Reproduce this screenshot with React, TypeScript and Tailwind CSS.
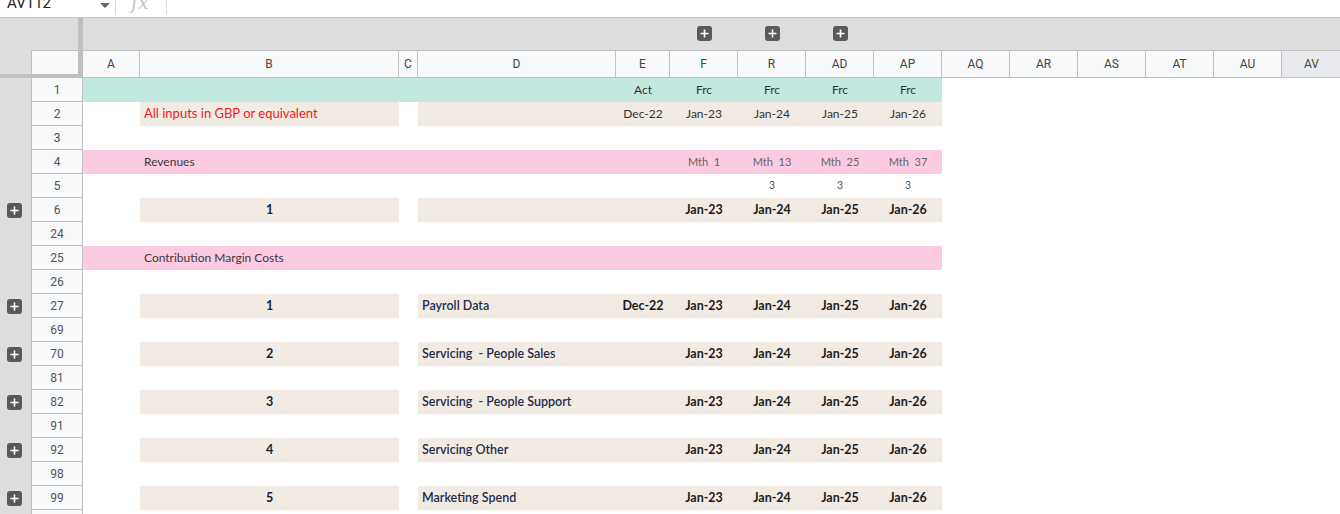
import React from "react";

type Col = { k: string; w: string };
const cols: Col[] = [
  { k: "A", w: "w-[57px]" },
  { k: "B", w: "w-[259px]" },
  { k: "C", w: "w-[19px]" },
  { k: "D", w: "w-[198px]" },
  { k: "E", w: "w-[54px]" },
  { k: "F", w: "w-[68px]" },
  { k: "R", w: "w-[68px]" },
  { k: "AD", w: "w-[68px]" },
  { k: "AP", w: "w-[68px]" },
  { k: "AQ", w: "w-[68px]" },
  { k: "AR", w: "w-[68px]" },
  { k: "AS", w: "w-[68px]" },
  { k: "AT", w: "w-[68px]" },
  { k: "AU", w: "w-[68px]" },
  { k: "AV", w: "w-[60px]" },
];

const Plus = () => (
  <div className="w-[15px] h-[15px] rounded-[3px] bg-[#5a5a5a] flex items-center justify-center shrink-0">
    <svg width="9" height="9" viewBox="0 0 9 9">
      <path d="M4.5 0.5v8M0.5 4.5h8" stroke="#ffffff" strokeWidth="1.6" />
    </svg>
  </div>
);

type Cell = { bg?: string; text?: React.ReactNode; cls?: string };
type RowDef = { n: string; plus?: boolean; cells: Record<string, Cell> };

const TEAL = "bg-[#c1e9df]";
const PINK = "bg-[#fdcbe1]";
const BEIGE = "bg-[#f2ebe4]";

const fillAll = (bg: string): Record<string, Cell> => {
  const r: Record<string, Cell> = {};
  ["A", "B", "C", "D", "E", "F", "R", "AD", "AP"].forEach((k) => (r[k] = { bg }));
  return r;
};
const beigeRow = (): Record<string, Cell> => {
  const r: Record<string, Cell> = {};
  ["B", "D", "E", "F", "R", "AD", "AP"].forEach((k) => (r[k] = { bg: BEIGE }));
  return r;
};

const norm = "justify-center text-[12px] text-[#333333]";
const boldJ = "justify-center text-[12.5px] font-bold text-[#1a1a1a]";

const sectionRow = (n: string, num: string, label: string, dec?: boolean): RowDef => {
  const c = beigeRow();
  c.B = { bg: BEIGE, text: num, cls: "justify-center text-[12.5px] font-bold text-[#0f1f3a]" };
  if (label) c.D = { bg: BEIGE, text: label, cls: "pl-[4px] text-[12.5px] font-semibold text-[#1d2b4d] whitespace-pre" };
  if (dec) c.E = { bg: BEIGE, text: "Dec-22", cls: boldJ };
  c.F = { bg: BEIGE, text: "Jan-23", cls: boldJ };
  c.R = { bg: BEIGE, text: "Jan-24", cls: boldJ };
  c.AD = { bg: BEIGE, text: "Jan-25", cls: boldJ };
  c.AP = { bg: BEIGE, text: "Jan-26", cls: boldJ };
  return { n, plus: true, cells: c };
};

const row1 = (() => {
  const c = fillAll(TEAL);
  c.E = { bg: TEAL, text: "Act", cls: norm };
  c.F = { bg: TEAL, text: "Frc", cls: norm };
  c.R = { bg: TEAL, text: "Frc", cls: norm };
  c.AD = { bg: TEAL, text: "Frc", cls: norm };
  c.AP = { bg: TEAL, text: "Frc", cls: norm };
  return c;
})();

const row2 = (() => {
  const c = beigeRow();
  c.B = { bg: BEIGE, text: "All inputs in GBP or equivalent", cls: "pl-[4px] text-[13px] text-[#f01c1c]" };
  c.E = { bg: BEIGE, text: "Dec-22", cls: norm };
  c.F = { bg: BEIGE, text: "Jan-23", cls: norm };
  c.R = { bg: BEIGE, text: "Jan-24", cls: norm };
  c.AD = { bg: BEIGE, text: "Jan-25", cls: norm };
  c.AP = { bg: BEIGE, text: "Jan-26", cls: norm };
  return c;
})();

const mth = "justify-center text-[11px] text-[#666666] whitespace-pre";
const row4 = (() => {
  const c = fillAll(PINK);
  c.B = { bg: PINK, text: "Revenues", cls: "pl-[4px] text-[12px] text-[#3a3a3a]" };
  c.F = { bg: PINK, text: "Mth  1", cls: mth };
  c.R = { bg: PINK, text: "Mth  13", cls: mth };
  c.AD = { bg: PINK, text: "Mth  25", cls: mth };
  c.AP = { bg: PINK, text: "Mth  37", cls: mth };
  return c;
})();

const three = "justify-center text-[10.5px] text-[#555555]";
const row5: Record<string, Cell> = {
  R: { text: "3", cls: three },
  AD: { text: "3", cls: three },
  AP: { text: "3", cls: three },
};

const row25 = (() => {
  const c = fillAll(PINK);
  c.B = { bg: PINK, text: "Contribution Margin Costs", cls: "pl-[4px] text-[12px] text-[#3a3a3a]" };
  return c;
})();

const rows: RowDef[] = [
  { n: "1", cells: row1 },
  { n: "2", cells: row2 },
  { n: "3", cells: {} },
  { n: "4", cells: row4 },
  { n: "5", cells: row5 },
  sectionRow("6", "1", ""),
  { n: "24", cells: {} },
  { n: "25", cells: row25 },
  { n: "26", cells: {} },
  sectionRow("27", "1", "Payroll Data", true),
  { n: "69", cells: {} },
  sectionRow("70", "2", "Servicing  - People Sales"),
  { n: "81", cells: {} },
  sectionRow("82", "3", "Servicing  - People Support"),
  { n: "91", cells: {} },
  sectionRow("92", "4", "Servicing Other"),
  { n: "98", cells: {} },
  sectionRow("99", "5", "Marketing Spend"),
  { n: "", cells: {} },
];

const groupCols = ["F", "R", "AD"];

export default function App() {
  return (
    <div className="w-[1340px] h-[514px] overflow-hidden bg-white font-['Lato','Noto_Sans',sans-serif]">
      {/* formula bar */}
      <div className="h-[18px] border-b border-[#c4c4c4] flex overflow-hidden bg-white">
        <div className="w-[115px] pl-[7px] relative font-['Roboto',sans-serif] text-[15px] leading-[20px] text-[#222] -mt-[7px]">
          AV112
          <div className="absolute left-[100px] top-[10px] w-0 h-0 border-l-[5px] border-r-[5px] border-t-[5px] border-l-transparent border-r-transparent border-t-[#666]" />
        </div>
        <div className="w-px h-[15px] bg-[#dadada]" />
        <div className="w-[50px] pl-[15px] font-['DejaVu_Serif',serif] italic text-[19px] leading-[20px] text-[#c4c4c4] -mt-[8px]">
          fx
        </div>
        <div className="w-px h-[14px] bg-[#dadada]" />
      </div>

      {/* header */}
      <div className="flex h-[60px]">
        <div className="w-[83px] h-[60px] flex flex-col border-b-[4px] border-[#c0c0c0] bg-[#dedede] shrink-0">
          <div className="flex flex-1">
            <div className="w-[78px] pt-[32px] pl-[31px]">
              <div className="w-[47px] h-[24px] border-l border-t border-[#c0c0c0] bg-[#f8f9fa]" />
            </div>
            <div className="w-[5px] bg-[#c0c0c0]" />
          </div>
        </div>
        <div className="flex-1 flex flex-col">
          <div className="h-[32px] bg-[#dedede] flex">
            {cols.map((c) => (
              <div key={c.k} className={`${c.w} shrink-0 flex justify-center pt-[8px]`}>
                {groupCols.includes(c.k) ? <Plus /> : null}
              </div>
            ))}
          </div>
          <div className="h-[28px] border-t border-b border-[#c0c0c0] flex">
            {cols.map((c) => (
              <div
                key={c.k}
                className={`${c.w} shrink-0 border-r border-[#c0c0c0] flex items-center justify-center font-['Roboto',sans-serif] text-[12px] text-[#444] ${
                  c.k === "AV" ? "bg-[#e8eaed]" : "bg-[#f8f9fa]"
                }`}
              >
                {c.k}
              </div>
            ))}
          </div>
        </div>
      </div>

      {/* rows */}
      <div className="flex flex-col">
        {rows.map((r, i) => (
          <div key={i} className="flex h-[24px]">
            <div className="w-[31px] shrink-0 bg-[#dedede] flex items-center pl-[7px]">
              {r.plus ? <Plus /> : null}
            </div>
            <div className="w-[52px] shrink-0 border-l border-r border-b border-[#c0c0c0] bg-[#f8f9fa] flex items-center justify-center font-['Roboto',sans-serif] text-[12px] text-[#555]">
              {r.n}
            </div>
            {cols.map((c) => {
              const cell = r.cells[c.k];
              return (
                <div
                  key={c.k}
                  className={`${c.w} shrink-0 h-[24px] flex items-center overflow-visible whitespace-nowrap ${cell?.bg ?? ""} ${cell?.cls ?? ""}`}
                >
                  {cell?.text ?? null}
                </div>
              );
            })}
          </div>
        ))}
      </div>
    </div>
  );
}
